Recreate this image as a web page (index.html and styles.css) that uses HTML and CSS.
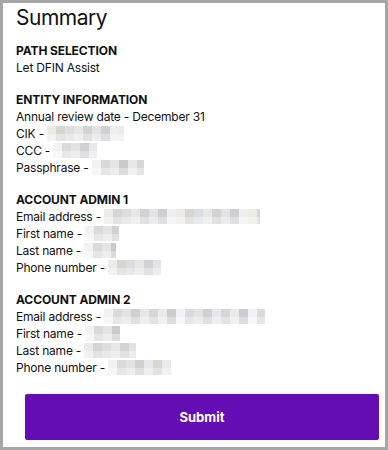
FILE: index.html
```html
<!DOCTYPE html>
<html lang="en">
<head>
<meta charset="utf-8">
<title>Summary</title>
<link rel="stylesheet" href="styles.css">
</head>
<body>
<div class="frame">
  <h1 class="title">Summary</h1>

  <section class="group">
    <h2 class="group-title">PATH SELECTION</h2>
    <div class="line">Let DFIN Assist</div>
  </section>

  <section class="group">
    <h2 class="group-title">ENTITY INFORMATION</h2>
    <div class="line">Annual review date - December 31</div>
    <div class="line">CIK - <span class="mask mask-a" style="width:77px"></span></div>
    <div class="line">CCC - <span class="mask mask-b" style="width:44px"></span></div>
    <div class="line">Passphrase - <span class="mask mask-c" style="width:52px"></span></div>
  </section>

  <section class="group">
    <h2 class="group-title">ACCOUNT ADMIN 1</h2>
    <div class="line">Email address - <span class="mask mask-a" style="width:156px"></span></div>
    <div class="line">First name - <span class="mask mask-b" style="width:34px"></span></div>
    <div class="line">Last name - <span class="mask mask-c" style="width:32px"></span></div>
    <div class="line">Phone number - <span class="mask mask-a" style="width:53px"></span></div>
  </section>

  <section class="group">
    <h2 class="group-title">ACCOUNT ADMIN 2</h2>
    <div class="line">Email address - <span class="mask mask-b" style="width:161px"></span></div>
    <div class="line">First name - <span class="mask mask-c" style="width:35px"></span></div>
    <div class="line">Last name - <span class="mask mask-a" style="width:52px"></span></div>
    <div class="line">Phone number - <span class="mask mask-b" style="width:63px"></span></div>
  </section>

  <div class="actions">
    <button class="submit" type="button">Submit</button>
  </div>
</div>
</body>
</html>
```

FILE: styles.css
```css
html, body {
  margin: 0;
  padding: 0;
  background: #ffffff;
}

.frame {
  box-sizing: border-box;
  width: 388px;
  height: 450px;
  border: 3px solid #a6a6a6;
  padding: 0 6px 0 13px;
  font-family: "Inter", "Liberation Sans", sans-serif;
  color: #111111;
  display: flex;
  flex-direction: column;
}

.title {
  margin: 0;
  font-size: 21px;
  font-weight: 400;
  line-height: 30px;
  height: 30px;
  letter-spacing: -0.5px;
}

.group {
  margin-top: 9px;
}

.group + .group {
  margin-top: 15px;
}

.group-title {
  margin: 0;
  font-size: 12px;
  font-weight: 700;
  line-height: 17px;
  letter-spacing: -0.1px;
}

.line {
  font-size: 12px;
  line-height: 17px;
  white-space: nowrap;
  letter-spacing: -0.2px;
}

.mask {
  display: inline-block;
  height: 15px;
  vertical-align: -3px;
  background-size: 100% 50%, 100% 100%;
  background-repeat: no-repeat;
  background-position: 0 100%, 0 0;
}

.mask-a {
  background-image:
    linear-gradient(rgba(255,255,255,0.35), rgba(255,255,255,0.35)),
    repeating-linear-gradient(90deg,
      #ecebe8 0 9px, #d6d5d4 9px 18px, #dcdde0 18px 27px,
      #e7e7e6 27px 36px, #d2d2d4 36px 45px, #e2e3e6 45px 54px,
      #cfcfd2 54px 63px, #eeeeee 63px 72px);
}

.mask-b {
  background-image:
    linear-gradient(rgba(255,255,255,0.35), rgba(255,255,255,0.35)),
    repeating-linear-gradient(90deg,
      #f0f2f5 0 9px, #dadada 9px 18px, #e3e3e3 18px 27px,
      #d0d0d2 27px 36px, #e6e7ea 36px 45px, #d8d5d2 45px 54px,
      #e9e9e9 54px 63px, #cdcdd0 63px 72px);
}

.mask-c {
  background-image:
    linear-gradient(rgba(255,255,255,0.35), rgba(255,255,255,0.35)),
    repeating-linear-gradient(90deg,
      #f2f2f2 0 9px, #d9d9d9 9px 18px, #e4e4e6 18px 27px,
      #cacaca 27px 36px, #e8e8ea 36px 45px, #d5d6d8 45px 54px);
}

.actions {
  margin-top: auto;
  padding: 0 0 7px 9px;
}

.submit {
  display: block;
  width: 354px;
  height: 46px;
  border: 0;
  border-radius: 2px;
  background: #640db4;
  color: #ffffff;
  font-family: "Inter", "Liberation Sans", sans-serif;
  font-size: 13px;
  font-weight: 700;
  cursor: pointer;
}
```
